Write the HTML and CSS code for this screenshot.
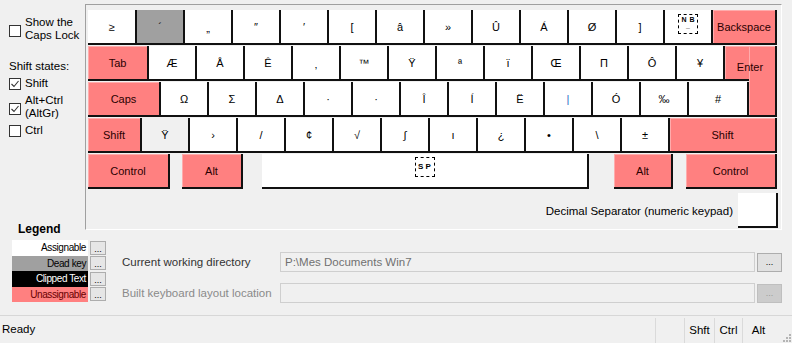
FILE: index.html
```html
<!DOCTYPE html>
<html lang="en">
<head>
    <meta charset="UTF-8">
    <title>Keyboard Layout Creator</title>
    <link rel="stylesheet" href="styles.css">
</head>
<body>
  <div class="app">
    <div class="opts">
      <div class="check two"><span class="box"></span><span>Show the<br>Caps Lock</span></div>
      <div class="opts-title">Shift states:</div>
      <div class="check"><span class="box"><svg viewBox="0 0 10 10"><path d="M1.5 5 L4 7.5 L8.5 2"/></svg></span><span>Shift</span></div>
      <div class="check two"><span class="box"><svg viewBox="0 0 10 10"><path d="M1.5 5 L4 7.5 L8.5 2"/></svg></span><span>Alt+Ctrl<br>(AltGr)</span></div>
      <div class="check"><span class="box"></span><span>Ctrl</span></div>
    </div>

    <div class="panel">
      <div class="kb">
        <div class="row">
          <div class="key first">≥</div>
          <div class="key dead">´</div>
          <div class="key low">„</div>
          <div class="key">″</div>
          <div class="key">′</div>
          <div class="key">[</div>
          <div class="key">â</div>
          <div class="key">»</div>
          <div class="key">Û</div>
          <div class="key">Á</div>
          <div class="key">Ø</div>
          <div class="key">]</div>
          <div class="key"><span class="nb">N B<i>_</i></span></div>
          <div class="key mod bksp">Backspace</div>
        </div>
        <div class="rows23">
          <div class="rows23-left">
            <div class="row">
              <div class="key mod tab">Tab</div>
              <div class="key">Æ</div>
              <div class="key">Å</div>
              <div class="key">Ê</div>
              <div class="key low">‚</div>
              <div class="key">™</div>
              <div class="key">Ÿ</div>
              <div class="key">ª</div>
              <div class="key">ï</div>
              <div class="key">Œ</div>
              <div class="key">Π</div>
              <div class="key">Ô</div>
              <div class="key">¥</div>
              <div class="key mod enter-cap"></div>
            </div>
            <div class="row">
              <div class="key mod caps">Caps</div>
              <div class="key">Ω</div>
              <div class="key">Σ</div>
              <div class="key">Δ</div>
              <div class="key">·</div>
              <div class="key">·</div>
              <div class="key">Î</div>
              <div class="key">Í</div>
              <div class="key">Ë</div>
              <div class="key blue">|</div>
              <div class="key">Ó</div>
              <div class="key">‰</div>
              <div class="key hash">#</div>
            </div>
          </div>
          <div class="key mod enter"><span>Enter</span></div>
        </div>
        <div class="row">
          <div class="key mod lshift">Shift</div>
          <div class="key lite">Ÿ</div>
          <div class="key">›</div>
          <div class="key">/</div>
          <div class="key">¢</div>
          <div class="key">√</div>
          <div class="key">∫</div>
          <div class="key">ı</div>
          <div class="key">¿</div>
          <div class="key">•</div>
          <div class="key">\</div>
          <div class="key">±</div>
          <div class="key mod rshift">Shift</div>
        </div>
        <div class="row">
          <div class="key mod ctrl-l">Control</div>
          <div class="key mod alt-l">Alt</div>
          <div class="key space"><span class="sp">S P</span></div>
          <div class="key mod alt-r">Alt</div>
          <div class="key mod ctrl-r">Control</div>
        </div>
      </div>
      <div class="decimal">
        <span>Decimal Separator (numeric keypad)</span>
        <div class="key dec"></div>
      </div>
    </div>

    <div class="legend">
      <div class="legend-title">Legend</div>
      <div class="legend-item"><span class="swatch s-assign">Assignable</span><span class="dots">...</span></div>
      <div class="legend-item"><span class="swatch s-dead">Dead key</span><span class="dots">...</span></div>
      <div class="legend-item"><span class="swatch s-clip">Clipped Text</span><span class="dots">...</span></div>
      <div class="legend-item"><span class="swatch s-unassign">Unassignable</span><span class="dots">...</span></div>
    </div>

    <div class="paths">
      <div class="path-row">
        <span class="path-label">Current working directory</span>
        <div class="path-field">P:\Mes Documents Win7</div>
        <span class="browse">...</span>
      </div>
      <div class="path-row off">
        <span class="path-label">Built keyboard layout location</span>
        <div class="path-field"></div>
        <span class="browse">...</span>
      </div>
    </div>
  </div>

  <div class="status">
    <span class="status-text">Ready</span>
    <span class="pane p-empty"></span>
    <span class="pane p-shft">Shft</span>
    <span class="pane p-ctrl">Ctrl</span>
    <span class="pane p-alt">Alt</span>
    <span class="grip"><svg viewBox="0 0 12 12"><g fill="#b4b4b4"><rect x="9" y="3" width="2" height="2"/><rect x="6" y="6" width="2" height="2"/><rect x="9" y="6" width="2" height="2"/><rect x="3" y="9" width="2" height="2"/><rect x="6" y="9" width="2" height="2"/><rect x="9" y="9" width="2" height="2"/></g></svg></span>
  </div>
</body>
</html>
```

FILE: styles.css
```css
body {
    margin: 0;
    height: 100vh;
    display: flex;
    flex-direction: column;
    background-color: #f0f0f0;
    font-family: "Liberation Sans", Arial, sans-serif;
    font-size: 11.5px;
    color: #000;
    overflow: hidden;
}

.app {
    display: grid;
    grid-template-columns: 85px 37px 1fr;
    padding: 4px 10px 0 0;
}

/* left options */
.opts {
    grid-column: 1;
    grid-row: 1;
    padding: 12px 0 0 9px;
    line-height: 13px;
}
.check {
    display: flex;
    align-items: center;
    gap: 4px;
    margin-top: 4px;
}
.check:first-child {
    margin-top: 0;
}
.check.two .box {
    margin-top: 3px;
}
.box {
    width: 12px;
    height: 12px;
    box-sizing: border-box;
    border: 1px solid #333;
    background: #fff;
    display: flex;
    align-items: center;
    justify-content: center;
    flex-shrink: 0;
}
.box svg {
    width: 10px;
    height: 10px;
}
.box path {
    fill: none;
    stroke: #333;
    stroke-width: 1.1;
}
.opts-title {
    margin-top: 18px;
}

/* keyboard panel */
.panel {
    grid-column: 2 / 4;
    grid-row: 1;
    border-top: 1px solid #a0a0a0;
    border-left: 1px solid #a0a0a0;
    border-right: 1px solid #fff;
    border-bottom: 1px solid #fff;
    padding: 5px 3px 1px 2px;
}
.kb {
    width: 689px;
    display: flex;
    flex-direction: column;
    gap: 1px;
}
.row {
    display: flex;
}
.rows23 {
    display: flex;
}
.rows23-left {
    display: flex;
    flex-direction: column;
    gap: 1px;
}
.key {
    width: 48px;
    height: 35px;
    box-sizing: border-box;
    border-right: 2px solid #111;
    border-bottom: 2px solid #111;
    background: #fff;
    display: flex;
    align-items: center;
    justify-content: center;
    font-size: 11px;
    flex-shrink: 0;
}
.key.mod {
    background: #ff8080;
    color: #2a0000;
    box-shadow: inset 1px 1px 0 rgba(255, 255, 255, 0.35);
}
.key.dead {
    background: #a0a0a0;
}
.key.lite {
    background: #f0f0f0;
}
.key.low {
    padding-top: 3px;
}
.key.blue {
    color: #2b6cc4;
}
.first { width: 49px; }
.bksp { width: 64px; }
.tab { width: 61px; }
.caps { width: 73px; }
.hash { width: 60px; }
.enter-cap {
    width: 24px;
    border-right: none;
}
.key.enter {
    width: 28px;
    height: 71px;
    display: block;
    padding-top: 15px;
}
.enter span {
    display: block;
    width: 50px;
    margin-left: -24px;
    text-align: center;
}
.lshift { width: 54px; }
.rshift { width: 107px; }
.ctrl-l { width: 82px; }
.alt-l { width: 61px; margin-left: 12px; }
.space {
    width: 327px;
    margin-left: 19px;
    align-items: flex-start;
    padding-top: 3px;
}
.alt-r { width: 59px; margin-left: 25px; }
.ctrl-r { width: 91px; margin-left: 13px; }

.nb, .sp {
    display: inline-block;
    box-sizing: border-box;
    border: 1px dashed #000;
    font-weight: bold;
    text-align: center;
}
.nb {
    width: 20px;
    height: 20px;
    font-size: 7px;
    line-height: 8px;
    margin-top: -5px;
    padding-top: 1px;
    word-spacing: 1px;
}
.nb i {
    display: block;
    font-style: normal;
    line-height: 4px;
}
.sp {
    width: 20px;
    height: 20px;
    font-size: 8px;
    line-height: 18px;
}

.decimal {
    display: flex;
    justify-content: flex-end;
    align-items: center;
    gap: 5px;
    margin-top: 4px;
}
.key.dec {
    width: 40px;
}

/* legend */
.legend {
    grid-column: 1 / 3;
    grid-row: 2;
    margin-top: -8px;
    padding-left: 12px;
}
.legend-title {
    font-weight: bold;
    font-size: 12px;
    line-height: 14px;
    padding-left: 6px;
    margin-bottom: 4px;
}
.legend-item {
    display: flex;
    height: 15.5px;
    align-items: center;
}
.swatch {
    width: 76px;
    height: 100%;
    box-sizing: border-box;
    padding-right: 2px;
    text-align: right;
    font-size: 10px;
    letter-spacing: -0.4px;
    line-height: 15.5px;
}
.s-assign { background: #fff; }
.s-dead { background: #a0a0a0; }
.s-clip { background: #000; color: #fff; }
.s-unassign { background: #ff8080; color: #6a0000; }
.dots {
    width: 16px;
    height: 14px;
    box-sizing: border-box;
    margin-left: 2px;
    border: 1px solid #adadad;
    background: #e6e6e6;
    font-size: 9px;
    line-height: 14px;
    text-align: center;
}

/* paths */
.paths {
    grid-column: 3;
    grid-row: 2;
    padding-top: 22px;
    display: flex;
    flex-direction: column;
    gap: 11px;
}
.path-row {
    display: flex;
    align-items: center;
    height: 20px;
}
.path-label {
    width: 158px;
    flex-shrink: 0;
    color: #333;
}
.path-field {
    flex: 1;
    height: 20px;
    box-sizing: border-box;
    border: 1px solid #cfcfcf;
    background: #f0f0f0;
    color: #707070;
    padding-left: 4px;
    line-height: 18px;
}
.browse {
    width: 25px;
    height: 19px;
    box-sizing: border-box;
    margin-left: 2px;
    border: 1px solid #adadad;
    background: #e1e1e1;
    font-size: 9px;
    line-height: 17px;
    text-align: center;
}
.off .path-label {
    color: #8a8a8a;
}
.off .browse {
    background: #cccccc;
    border-color: #bfbfbf;
    color: #9a9a9a;
}

/* status bar */
.status {
    margin-top: auto;
    height: 28px;
    box-sizing: border-box;
    border-top: 1px solid #d7d7d7;
    display: flex;
}
.status-text {
    flex: 1;
    padding-left: 2px;
    line-height: 27px;
}
.pane {
    border-left: 1px solid #dadada;
    margin-top: 2px;
    line-height: 25px;
    text-align: center;
    box-sizing: border-box;
}
.p-empty { width: 29px; }
.p-shft { width: 30px; }
.p-ctrl { width: 28px; }
.p-alt { width: 32px; }
.grip {
    width: 18px;
    display: flex;
    align-items: flex-end;
    justify-content: flex-end;
}
.grip svg {
    width: 12px;
    height: 12px;
}
```
